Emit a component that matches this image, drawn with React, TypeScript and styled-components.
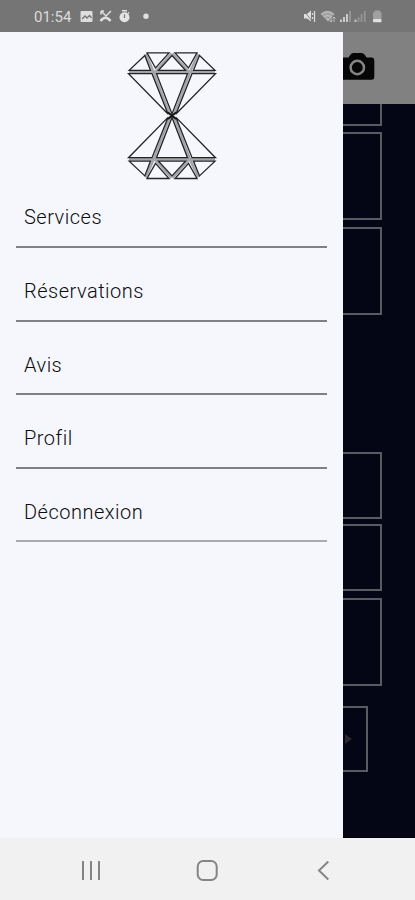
import React from "react";
import styled, { createGlobalStyle } from "styled-components";

const GlobalStyle = createGlobalStyle`
  * { box-sizing: border-box; }
  body { margin: 0; background: #f1f1f1; font-family: Roboto, "Liberation Sans", sans-serif; }
`;

const Screen = styled.div`
  width: 415px;
  height: 900px;
  display: flex;
  flex-direction: column;
  overflow: hidden;
`;

const StatusBar = styled.header`
  height: 32px;
  flex: none;
  display: flex;
  justify-content: space-between;
  padding: 1px 30px 0 34px;
  background: #757575;
`;

const StatusGroup = styled.div`
  display: flex;
  align-items: center;
`;

const Clock = styled.span`
  width: 45px;
  font-size: 15px;
  line-height: 32px;
  color: #dcdcdc;
`;

const Main = styled.main`
  flex: 1;
  display: flex;
  min-height: 0;
`;

const Drawer = styled.aside`
  width: 343px;
  background: #f6f7fc;
  padding: 16px 16px 0;
`;

const Logo = styled.svg`
  display: block;
  width: 96px;
  height: 136px;
  margin-left: 108px;
`;

const Menu = styled.nav`
  display: flex;
  flex-direction: column;
  margin-top: -9.6px;
`;

const MenuItem = styled.a<{ $faint?: boolean }>`
  height: 73.6px;
  width: 311px;
  padding: 31px 8px 0;
  border-bottom: 2px solid ${(p) => (p.$faint ? "#a9aaae" : "#808185")};
  font-size: 20px;
  line-height: 24px;
  font-weight: 300;
  letter-spacing: 0.5px;
  color: #0c0c0e;
`;

const Backdrop = styled.section`
  width: 72px;
  display: flex;
  flex-direction: column;
  background: #040616;
  border-bottom: 1px solid #000;
`;

const TopBar = styled.div`
  height: 72px;
  flex: none;
  background: #818181;
  padding-top: 20px;
`;

const Field = styled.div<{ $h: number; $gap: number; $w?: number }>`
  flex: none;
  display: flex;
  align-items: center;
  width: ${(p) => p.$w ?? 39}px;
  height: ${(p) => p.$h}px;
  margin-top: ${(p) => p.$gap}px;
  border: 2px solid #5a5b60;
  border-left: 0;
`;

const TopField = styled(Field)`
  border-top: 0;
`;

const NavBar = styled.footer`
  height: 62px;
  flex: none;
  background: #f1f1f1;
`;

const CameraSvg = styled.svg`
  display: block;
`;

const CameraIcon = () => (
  <CameraSvg width="34" height="30" viewBox="0 0 34 30">
    <path
      d="M0 5.500H5.500L7.500 2.500Q8.500 1 10.500 1H18.500Q20.500 1 21.500 2.500L23.500 5.500H28.500Q31.300 5.500 31.300 8.500V24.800Q31.300 27.800 28.500 27.800H0Z"
      fill="#060606"
    />
    <circle cx="14.3" cy="15.500" r="6.700" fill="#060606" stroke="#858585" strokeWidth="2.500" />
  </CameraSvg>
);

const Diamond = () => (
  <g fill="none" strokeLinejoin="miter">
    <path
      d="M5 24H91M21.800 6L29.500 24L46 67M74.300 6L66 24L50 67M47.500 5.500L31 24M48.500 5.500L65 24"
      stroke="#a3a5a9"
      strokeWidth="2.600"
    />
    <g stroke="#242427" strokeWidth="1.300">
      <path d="M23 4.900H45L31.500 20Z" />
      <path d="M51 4.900H73L64.500 20Z" />
      <path d="M20.800 7.500L5.200 22.300H26.500Z" />
      <path d="M75.500 7.500L91 22.300H69.500Z" />
      <path d="M48 7.500L34.500 22.300H61.500Z" />
      <path d="M4.500 25.700H28L44 66Z" />
      <path d="M91.500 25.700H68L52 66Z" />
      <path d="M32.500 25.700H63.500L48 66Z" />
    </g>
  </g>
);

const items = ["Services", "Réservations", "Avis", "Profil", "Déconnexion"];

export default function App() {
  return (
    <>
      <GlobalStyle />
      <Screen>
        <StatusBar>
          <StatusGroup>
            <Clock>01:54</Clock>
            <svg width="74" height="18" viewBox="79 8 74 18">
              <rect x="80.5" y="11" width="12" height="11" rx="1" fill="#dedede" />
              <path d="M82 19L85 16L87 18L89.500 15.500L91.500 18" fill="none" stroke="#757575" strokeWidth="1.3" />
              <path d="M101 11L106 16L111 11M101 11V14.500M101 11H104" fill="none" stroke="#dedede" strokeWidth="1.5" />
              <path d="M100.500 21Q105.500 14.500 110.500 21" fill="none" stroke="#dedede" strokeWidth="2.6" />
              <circle cx="124.500" cy="17.200" r="5" fill="#e4e4e4" />
              <path d="M122 10.700H127M128 12.500L129 13.500" stroke="#e4e4e4" strokeWidth="1.6" />
              <path d="M124.500 14.500V18" stroke="#757575" strokeWidth="1.2" />
              <circle cx="146" cy="16.300" r="2.700" fill="#e0e0e0" />
            </svg>
          </StatusGroup>
          <StatusGroup>
            <svg width="82" height="18" viewBox="303 8 82 18">
              <path d="M304 14H307L311 10.500V21.500L307 18.500H304Z" fill="#dedede" />
              <path d="M304 11L312.500 21.500" stroke="#757575" strokeWidth="0.8" />
              <path d="M314.500 11V22M312.500 13V15M312.500 17V19" stroke="#d8d8d8" strokeWidth="1.3" />
              <path d="M320.500 14Q327.500 7.500 334.500 14L328 21.500Z" fill="#b5b5b5" />
              <path d="M322 16Q327.500 11.500 333 16M324.500 18.500Q328 16 331 18.500" fill="none" stroke="#858585" strokeWidth="0.8" />
              <path d="M331 17V22M329.500 20.500L331 22L332.500 20.500M334 22V17M332.500 18.500L334 17L335.500 18.500" stroke="#c5c5c5" fill="none" strokeWidth="0.9" />
              <path d="M341 19.500V22M344 17V22M347 14V22" stroke="#cacaca" strokeWidth="2" />
              <path d="M350 11V22" stroke="#999" strokeWidth="1.8" />
              <path d="M355.500 19.500V22" stroke="#c2c2c2" strokeWidth="2" />
              <path d="M358.500 17V22M361.500 14V22M364.700 11V22" stroke="#949494" strokeWidth="1.8" />
              <path d="M373 19V13Q373 12 374.500 12V10.500H380V12Q381.500 12 381.500 13V19Z" fill="#a0a0a0" />
              <rect x="373" y="19" width="8.500" height="3.300" rx=".7" fill="#e0e0e0" />
            </svg>
          </StatusGroup>
        </StatusBar>
        <Main>
          <Drawer>
            <Logo viewBox="0 0 96 136">
              <Diamond />
              <g transform="translate(0 135.400) scale(1 -1)">
                <Diamond />
              </g>
              <path d="M44 64.500L52 71M52 64.500L44 71" stroke="#111" strokeWidth="1.800" />
            </Logo>
            <Menu>
              {items.map((item, i) => (
                <MenuItem key={item} $faint={i === items.length - 1}>
                  {item}
                </MenuItem>
              ))}
            </Menu>
          </Drawer>
          <Backdrop>
            <TopBar>
              <CameraIcon />
            </TopBar>
            <TopField $h={22} $gap={0} />
            <Field $h={88} $gap={6} />
            <Field $h={88} $gap={7} />
            <Field $h={67} $gap={137} />
            <Field $h={67} $gap={5} />
            <Field $h={88} $gap={7} />
            <Field $h={66} $gap={20} $w={25}>
              <svg width="10" height="12" viewBox="0 0 10 12">
                <path d="M2 1L9 6L2 11Z" fill="#29292d" />
              </svg>
            </Field>
          </Backdrop>
        </Main>
        <NavBar>
          <svg width="415" height="62" viewBox="0 838 415 62" fill="none" stroke="#858585">
            <path d="M83 861V880M91 861V880M99 861V880" strokeWidth="2" />
            <rect x="197.700" y="861" width="19" height="19" rx="5.500" strokeWidth="2" />
            <path d="M328.300 861.500L319 870.500L328.300 879.500" strokeWidth="2" />
          </svg>
        </NavBar>
      </Screen>
    </>
  );
}
